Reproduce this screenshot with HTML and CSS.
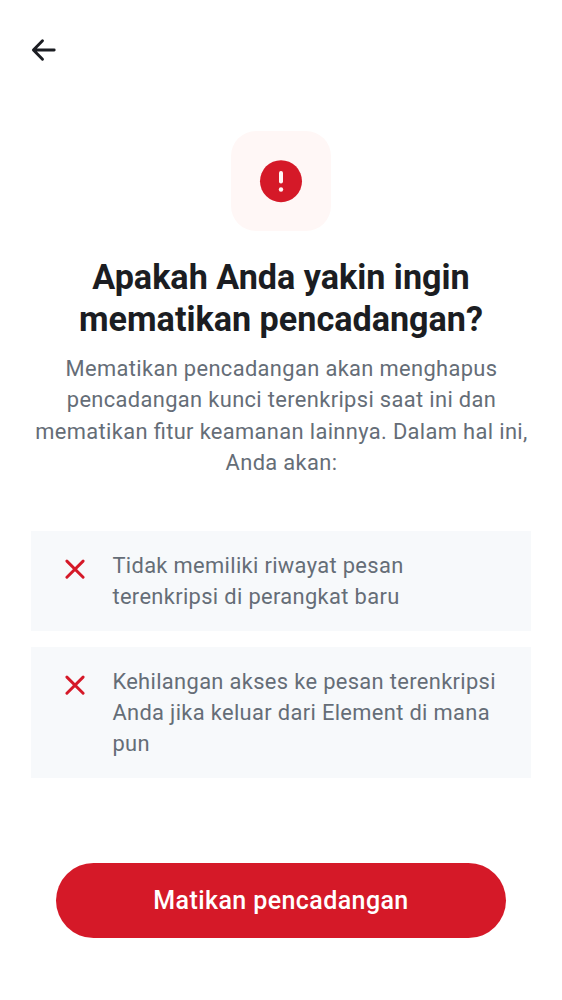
FILE: index.html
```html
<!DOCTYPE html>
<html lang="id">
<head>
<meta charset="utf-8">
<title>Matikan pencadangan</title>
<link rel="stylesheet" href="styles.css">
</head>
<body>
<main class="screen">
  <header class="topbar">
    <svg class="back" viewBox="0 0 25 22" role="img" aria-label="Kembali"><path d="M23.200 11H3M11.500 1.700 2.400 11l9.100 9.300"/></svg>
  </header>
  <div class="hero">
    <svg class="alert" viewBox="0 0 42 42"><circle cx="21" cy="21.200" r="21"/><rect x="19" y="11" width="4" height="12.400" rx="1.900"/><circle class="dot" cx="21" cy="29.500" r="2.200"/></svg>
  </div>
  <h1 class="title"><span>Apakah Anda yakin ingin</span><br><span>mematikan pencadangan?</span></h1>
  <p class="intro">Mematikan pencadangan akan menghapus<br>pencadangan kunci terenkripsi saat ini dan<br>mematikan <span class="liga">fi</span>tur keamanan lainnya. Dalam hal ini,<br>Anda akan:</p>
  <ul class="list">
    <li class="item"><svg class="cross" viewBox="0 0 20 20"><path d="M1.900 2.100l16.200 16.200M18.100 2.100l-16.200 16.200"/></svg><span>Tidak memiliki riwayat pesan<br>terenkripsi di perangkat baru</span></li>
    <li class="item"><svg class="cross" viewBox="0 0 20 20"><path d="M1.900 2.100l16.200 16.200M18.100 2.100l-16.200 16.200"/></svg><span>Kehilangan akses ke pesan terenkripsi<br>Anda jika keluar dari Element di mana<br>pun</span></li>
  </ul>
  <button class="action" type="button">Matikan pencadangan</button>
</main>
</body>
</html>
```
FILE: styles.css
```css
* { box-sizing: border-box; }
body { margin: 0; background: #fff; font-family: Roboto, sans-serif; }
.screen { display: flex; flex-direction: column; height: 1000px; padding: 0 31px 62.5px; }
.topbar { height: 131px; padding-top: 39px; }
.back { display: block; width: 25px; height: 22px; fill: none; stroke: #1b1d22; stroke-width: 2.9; stroke-linecap: round; stroke-linejoin: round; overflow: visible; }
.hero { display: grid; place-items: center; width: 100px; height: 100px; margin: 0 auto; border-radius: 25px; background: #fff7f6; }
.alert { width: 42px; height: 42px; fill: #d51928; overflow: visible; }
.alert rect, .alert .dot { fill: #fff7f6; }
.title { margin: 24.7px 0 0; color: #1b1d22; text-align: center; font-size: 34.15px; line-height: 42.5px; font-weight: 700; white-space: nowrap; }
.intro { margin: 12.4px -11px 0 -10px; color: #656d77; text-align: center; font-size: 21.875px; line-height: 31.25px; letter-spacing: 0.36px; white-space: nowrap; }
.liga { letter-spacing: 0; font-variant-ligatures: common-ligatures; margin-right: 0.36px; }
.list { display: flex; flex-direction: column; gap: 16px; margin: 52.9px 0 0; padding: 0; list-style: none; }
.item { display: flex; gap: 27.4px; padding: 19px 0 18.5px 34px; background: #f7f9fb; color: #656d77; font-size: 21.875px; line-height: 31.2px; letter-spacing: 0.35px; white-space: nowrap; }
.cross { flex: none; width: 20px; height: 20px; margin-top: 9px; fill: none; stroke: #d51928; stroke-width: 2.9; stroke-linecap: round; }
.action { height: 75px; margin: auto 25px 0; padding: 1px 0 0; border: 0; border-radius: 38px; background: #d51928; color: #fff; font: 500 25px/37.5px Roboto, sans-serif; letter-spacing: 0.41px; }
```
